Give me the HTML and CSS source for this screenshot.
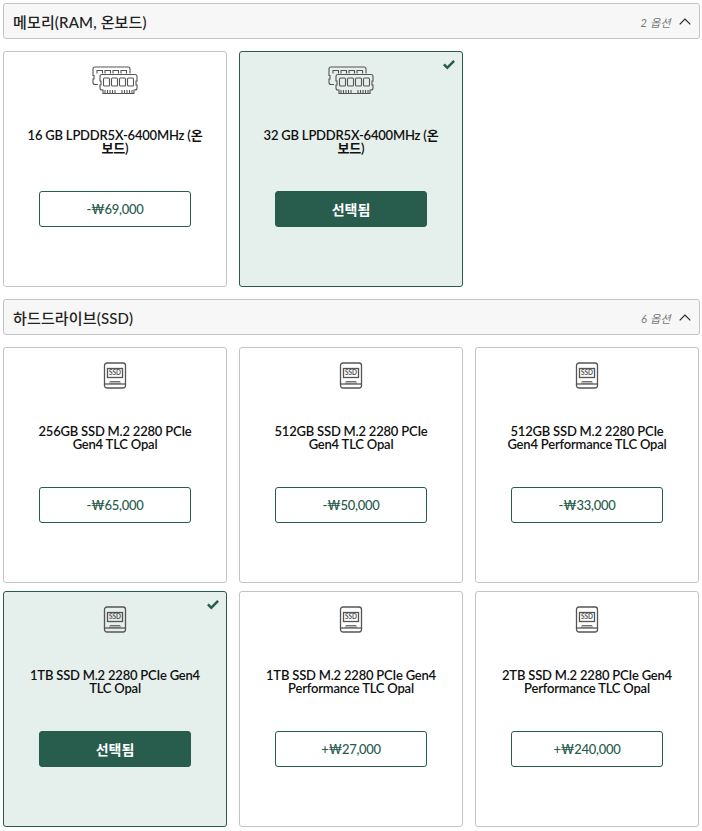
FILE: index.html
```html
<!DOCTYPE html>
<html lang="ko">
<head>
    <meta charset="UTF-8">
    <meta name="viewport" content="width=device-width, initial-scale=1.0">
    <title>옵션 선택</title>
    <link rel="stylesheet" href="styles.css">
</head>
<body>
    <svg class="icon-defs" width="0" height="0">
        <symbol id="icon-ram" viewBox="0 0 46 28">
            <g fill="none" stroke="currentColor" stroke-width="1.1">
                <path d="M6 18.500H3C1.800 18.500 1 17.700 1 16.500V13H2V9.500H1V3C1 1.800 1.800 1 3 1H36C37.200 1 38 1.800 38 3V7.500"/>
                <path d="M5 7.500V4.500H10.500V7.500M13 7.500V4.500H18.500V7.500M21 7.500V4.500H26.500V7.500M29 7.500V4.500H34.500V7.500"/>
                <path d="M10 8.500H43C44.200 8.500 45 9.300 45 10.500V15H44V19H45V22C45 23.200 44.200 24 43 24H42V27.500H11V24H10C8.800 24 8 23.200 8 22V19H9V15H8V10.500C8 9.300 8.800 8.500 10 8.500Z"/>
                <rect x="11.500" y="12" width="6" height="8" rx="1"/>
                <rect x="19.500" y="12" width="6" height="8" rx="1"/>
                <rect x="27.500" y="12" width="6" height="8" rx="1"/>
                <rect x="35.500" y="12" width="6" height="8" rx="1"/>
                <path d="M13 24V27.500M15.500 24V27.500M18 24V27.500M20.500 24V27.500M23 24V27.500M30 24V27.500M32.500 24V27.500M35 24V27.500M37.500 24V27.500M40 24V27.500"/>
            </g>
        </symbol>
        <symbol id="icon-ssd" viewBox="0 0 24 28">
            <g fill="none" stroke="currentColor" stroke-width="1.300">
                <rect x="1.500" y="1" width="21" height="25" rx="2.500"/>
                <rect x="4.500" y="6.500" width="15" height="9"/>
                <path d="M1.500 22H22.500"/>
                <path d="M7 22V19.500H17V22M9 19.500V22M11 19.500V22M13 19.500V22M15 19.500V22" stroke-width=".8"/>
            </g>
            <text x="12" y="13.300" class="ssd-label">SSD</text>
        </symbol>
        <symbol id="icon-check" viewBox="0 0 12 10">
            <path d="M0 5.300 1.800 3.500 4.300 6 10.200 0 12 1.800 4.300 9.600Z" fill="currentColor"/>
        </symbol>
    </svg>

    <section class="group">
        <div class="group-header">
            <h2>메모리(RAM, 온보드)</h2>
            <div class="group-meta">
                <span>2 옵션</span>
                <svg class="chevron" viewBox="0 0 12 7"><path d="M.7 6.300 6 1l5.300 5.300"/></svg>
            </div>
        </div>
        <div class="option-list">
            <div class="option">
                <svg class="icon icon-wide"><use href="#icon-ram"/></svg>
                <h3>16 GB LPDDR5X-6400MHz (온보드)</h3>
                <button class="price">-₩69,000</button>
            </div>
            <div class="option selected">
                <svg class="check"><use href="#icon-check"/></svg>
                <svg class="icon icon-wide"><use href="#icon-ram"/></svg>
                <h3>32 GB LPDDR5X-6400MHz (온보드)</h3>
                <button class="price">선택됨</button>
            </div>
        </div>
    </section>

    <section class="group">
        <div class="group-header">
            <h2>하드드라이브(SSD)</h2>
            <div class="group-meta">
                <span>6 옵션</span>
                <svg class="chevron" viewBox="0 0 12 7"><path d="M.7 6.300 6 1l5.300 5.300"/></svg>
            </div>
        </div>
        <div class="option-list">
            <div class="option">
                <svg class="icon"><use href="#icon-ssd"/></svg>
                <h3>256GB SSD M.2 2280 PCIe Gen4 TLC Opal</h3>
                <button class="price">-₩65,000</button>
            </div>
            <div class="option">
                <svg class="icon"><use href="#icon-ssd"/></svg>
                <h3>512GB SSD M.2 2280 PCIe Gen4 TLC Opal</h3>
                <button class="price">-₩50,000</button>
            </div>
            <div class="option">
                <svg class="icon"><use href="#icon-ssd"/></svg>
                <h3>512GB SSD M.2 2280 PCIe Gen4 Performance TLC Opal</h3>
                <button class="price">-₩33,000</button>
            </div>
            <div class="option selected">
                <svg class="check"><use href="#icon-check"/></svg>
                <svg class="icon"><use href="#icon-ssd"/></svg>
                <h3>1TB SSD M.2 2280 PCIe Gen4 TLC Opal</h3>
                <button class="price">선택됨</button>
            </div>
            <div class="option">
                <svg class="icon"><use href="#icon-ssd"/></svg>
                <h3>1TB SSD M.2 2280 PCIe Gen4 Performance TLC Opal</h3>
                <button class="price">+₩27,000</button>
            </div>
            <div class="option">
                <svg class="icon"><use href="#icon-ssd"/></svg>
                <h3>2TB SSD M.2 2280 PCIe Gen4 Performance TLC Opal</h3>
                <button class="price">+₩240,000</button>
            </div>
        </div>
    </section>
</body>
</html>
```

FILE: styles.css
```css
body {
    font-family: 'Lato', 'Noto Sans CJK KR', sans-serif;
    margin: 0;
    padding: 3px 2px 0 3px;
    background-color: #ffffff;
    color: #000000;
}

.icon-defs {
    display: none;
}

.group {
    margin-bottom: 12px;
}

.group-header {
    height: 36px;
    box-sizing: border-box;
    display: flex;
    justify-content: space-between;
    align-items: center;
    padding: 1px 8px 0 9px;
    background-color: #f7f7f7;
    border: 1px solid #c4c4c4;
    border-radius: 3px;
    margin-bottom: 12px;
}

.group-header h2 {
    margin: 0;
    font-size: 15px;
    font-weight: 500;
    line-height: 20px;
    letter-spacing: 0.15px;
    color: #222222;
}

.group-meta {
    display: flex;
    align-items: center;
    gap: 8px;
    font-size: 11px;
    font-style: italic;
    letter-spacing: 0.3px;
    color: #777777;
}

.chevron {
    width: 12px;
    height: 7px;
    fill: none;
    stroke: #222222;
    stroke-width: 1.2;
}

.option-list {
    display: grid;
    grid-template-columns: repeat(3, 224px);
    column-gap: 12px;
    row-gap: 8px;
}

.option {
    position: relative;
    box-sizing: border-box;
    height: 236px;
    padding: 14px 20px 0;
    background-color: #ffffff;
    border: 1px solid #c4c4c4;
    border-radius: 3px;
    text-align: center;
}

.option.selected {
    background-color: #e5efeb;
    border-color: #285c4d;
}

.icon {
    display: block;
    width: 24px;
    height: 28px;
    margin: 0 auto;
    color: #555555;
}

.icon-wide {
    width: 46px;
}

.ssd-label {
    font-family: 'Lato', sans-serif;
    font-size: 6.5px;
    font-weight: 700;
    text-anchor: middle;
    fill: currentColor;
}

.option h3 {
    height: 28px;
    margin: 35px 0 34px;
    font-size: 13px;
    font-weight: 600;
    line-height: 13px;
    letter-spacing: -0.2px;
    color: #111111;
}

.price {
    display: block;
    width: 152px;
    height: 36px;
    margin: 0 auto;
    padding: 0;
    background-color: #ffffff;
    color: #285c4d;
    border: 1px solid #285c4d;
    border-radius: 3px;
    font-family: inherit;
    font-size: 13px;
    font-weight: 500;
    letter-spacing: -0.3px;
    cursor: pointer;
}

.selected .price {
    background-color: #285c4d;
    color: #ffffff;
    font-size: 14px;
    font-weight: 700;
    letter-spacing: 0;
}

.check {
    position: absolute;
    top: 8px;
    right: 7px;
    width: 12px;
    height: 10px;
    color: #285c4d;
}
```
